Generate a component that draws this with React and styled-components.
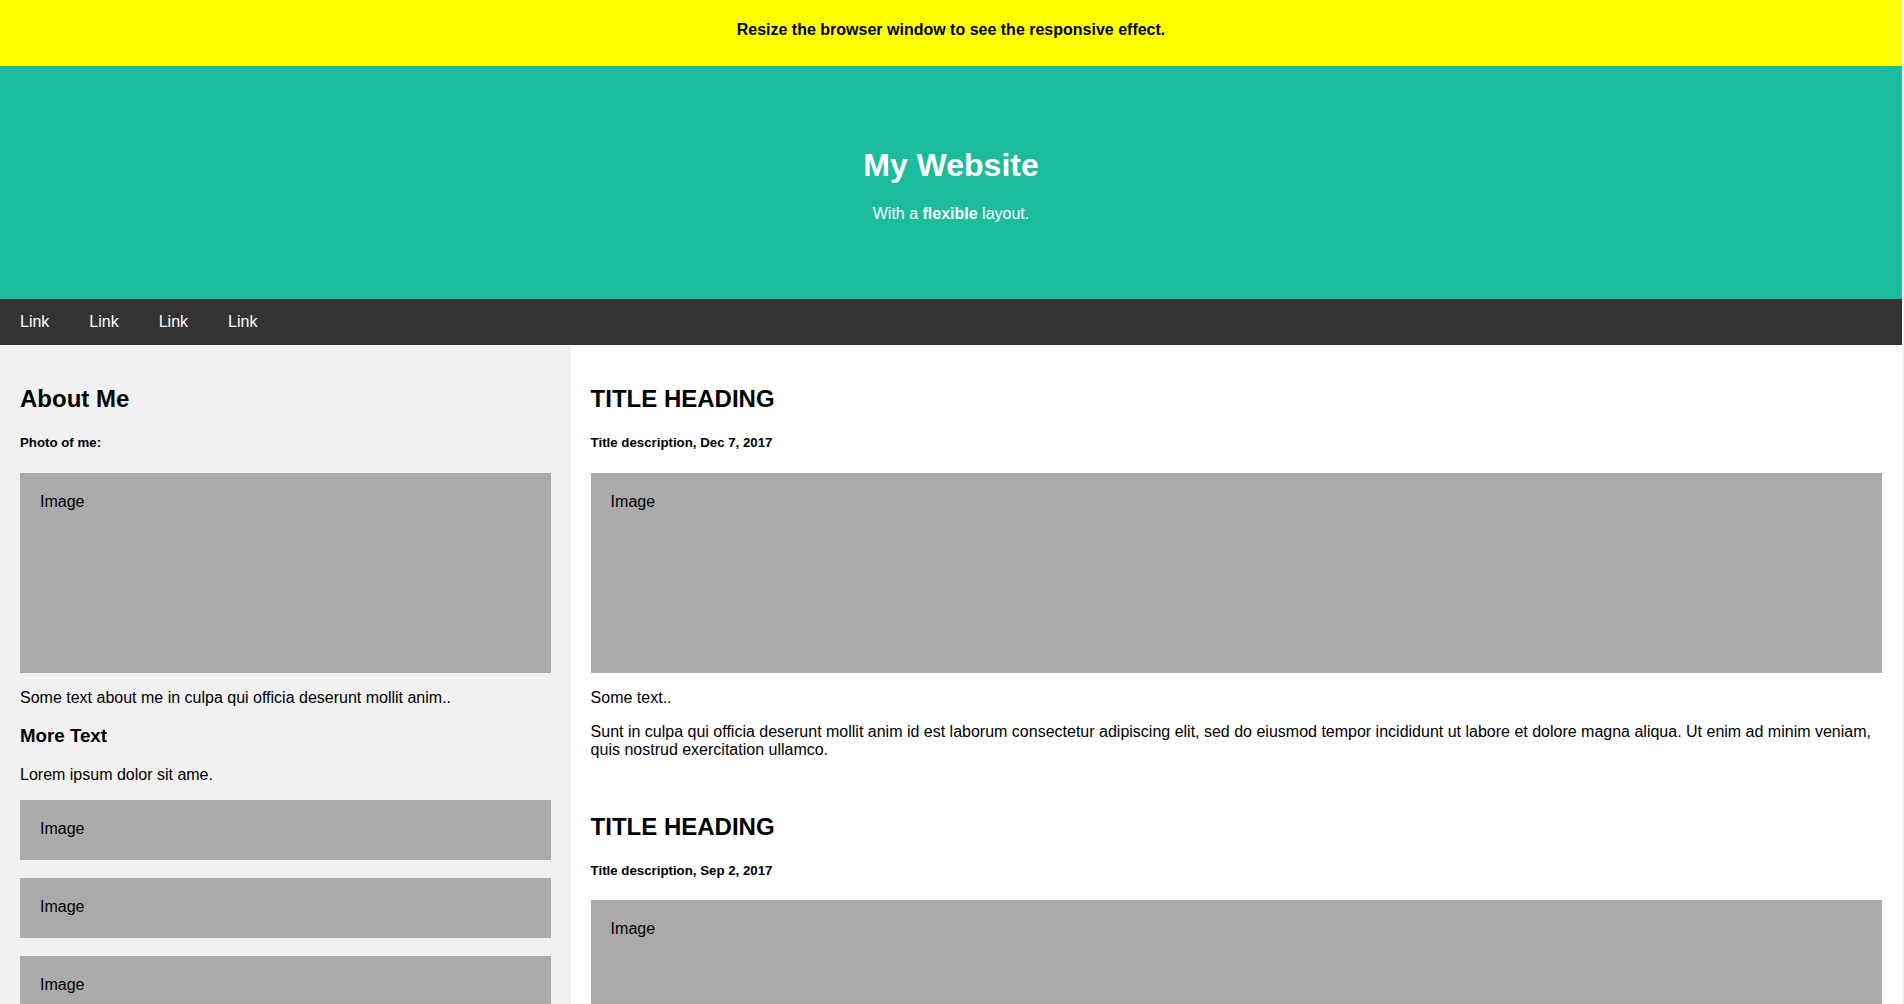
import React from "react";
import styled, { createGlobalStyle } from "styled-components";

const GlobalStyle = createGlobalStyle`
  * { box-sizing: border-box; }
  html { background: #f3f3f3; }
  body {
    margin: 0 2px 0 0;
    background: #ffffff;
    font-family: "Liberation Sans", Arial, sans-serif;
    color: #000;
  }
`;

const Banner = styled.div`
  background: #ffff00;
  padding: 5px;
`;

const BannerText = styled.h4`
  text-align: center;
  font-size: 16px;
  font-weight: bold;
  margin: 16.28px 0 21.28px;
`;

const Header = styled.header`
  padding: 60px;
  text-align: center;
  background: #1abc9c;
  color: #ffffff;
`;

const SiteTitle = styled.h1`
  font-size: 32px;
  margin: 21.44px 0;
`;

const Tagline = styled.p`
  font-size: 16px;
  margin: 16px 0;
`;

const Navbar = styled.nav`
  display: flex;
  background-color: #333333;
`;

const NavLink = styled.a`
  color: #ffffff;
  padding: 14px 20px;
  text-decoration: none;
  text-align: center;
  font-size: 16px;
`;

const Row = styled.div`
  display: flex;
  flex-wrap: wrap;
`;

const Side = styled.aside`
  flex: 30%;
  background-color: #f1f1f1;
  padding: 20px;
`;

const Main = styled.main`
  flex: 70%;
  background-color: #ffffff;
  padding: 20px;
`;

const Heading = styled.h2`
  font-size: 24px;
  margin: 19.92px 0;
`;

const SubHeading = styled.h3`
  font-size: 18.72px;
  margin: 18.72px 0;
`;

const Caption = styled.h5`
  font-size: 13.28px;
  margin: 22.18px 0;
`;

const Text = styled.p`
  font-size: 16px;
  margin: 16px 0;
`;

const FakeImg = styled.div`
  background-color: #aaaaaa;
  width: 100%;
  padding: 20px;
  height: ${(p) => p.$h}px;
  font-size: 16px;
`;

const Spacer = styled.div`
  height: ${(p) => p.$h}px;
`;

const Footer = styled.footer`
  padding: 20px;
  text-align: center;
  background: #dddddd;
`;

const FooterTitle = styled.h2`
  font-size: 24px;
  margin: 19.92px 0;
`;

const posts = [
  { date: "Dec 7, 2017" },
  { date: "Sep 2, 2017" },
];

export default function App() {
  return (
    <>
      <GlobalStyle />
      <Banner>
        <BannerText>Resize the browser window to see the responsive effect.</BannerText>
      </Banner>
      <Header>
        <SiteTitle>My Website</SiteTitle>
        <Tagline>
          With a <b>flexible</b> layout.
        </Tagline>
      </Header>
      <Navbar>
        <NavLink href="#">Link</NavLink>
        <NavLink href="#">Link</NavLink>
        <NavLink href="#">Link</NavLink>
        <NavLink href="#">Link</NavLink>
      </Navbar>
      <Row>
        <Side>
          <Heading>About Me</Heading>
          <Caption>Photo of me:</Caption>
          <FakeImg $h={200}>Image</FakeImg>
          <Text>Some text about me in culpa qui officia deserunt mollit anim..</Text>
          <SubHeading>More Text</SubHeading>
          <Text>Lorem ipsum dolor sit ame.</Text>
          <FakeImg $h={60}>Image</FakeImg>
          <Spacer $h={18} />
          <FakeImg $h={60}>Image</FakeImg>
          <Spacer $h={18} />
          <FakeImg $h={60}>Image</FakeImg>
        </Side>
        <Main>
          {posts.map((post, i) => (
            <React.Fragment key={post.date}>
              {i > 0 && <Spacer $h={18} />}
              <Heading>TITLE HEADING</Heading>
              <Caption>Title description, {post.date}</Caption>
              <FakeImg $h={200}>Image</FakeImg>
              <Text>Some text..</Text>
              <Text>
                Sunt in culpa qui officia deserunt mollit anim id est laborum consectetur adipiscing elit,
                sed do eiusmod tempor incididunt ut labore et dolore magna aliqua. Ut enim ad minim veniam,
                quis nostrud exercitation ullamco.
              </Text>
            </React.Fragment>
          ))}
        </Main>
      </Row>
      <Footer>
        <FooterTitle>Footer</FooterTitle>
      </Footer>
    </>
  );
}
